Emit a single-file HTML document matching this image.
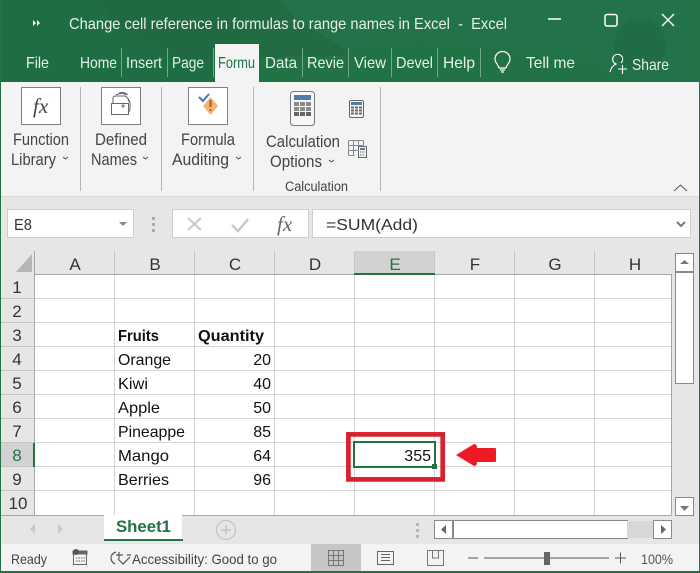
<!DOCTYPE html>
<html><head><meta charset="utf-8"><style>
html,body{margin:0;padding:0;width:700px;height:573px;overflow:hidden;background:#217346}
svg{display:block}
text{font-family:"Liberation Sans",sans-serif}
.t{fill:#e4f0e9;font-size:16px}
.r{fill:#444;font-size:16.500px}
.h{fill:#333;font-size:17px;text-anchor:middle}
.c{fill:#111;font-size:16px}
</style></head><body>
<svg width="700" height="573" viewBox="0 0 700 573" xmlns="http://www.w3.org/2000/svg">
<rect width="700" height="573" fill="#217346"/>
<rect x="0" y="0" width="240" height="82" fill="#1f6e43"/>
<path d="M240 0H700V82H640C600 60 560 50 520 50L420 40C350 45 300 50 240 45Z" fill="#23734a"/>
<path d="M100 0H280C300 30 340 40 350 55L180 60C130 40 110 20 100 0Z" fill="#23663f" opacity=".6"/>
<circle cx="640" cy="45" r="26" fill="#206c44"/>
<!-- title -->
<path d="M33 20l3 3-3 3zM37 20l3 3-3 3z" fill="#fff"/>
<text class="t" x="69" y="29" textLength="438" lengthAdjust="spacingAndGlyphs" xml:space="preserve">Change cell reference in formulas to range names in Excel  -  Excel</text>
<path d="M548 19h13" stroke="#fff" stroke-width="1.500"/>
<rect x="605" y="14.500" width="12" height="11.500" rx="2" fill="none" stroke="#fff" stroke-width="1.500"/>
<path d="M662 14l12 12M674 14l-12 12" stroke="#fff" stroke-width="1.400"/>
<!-- tabs -->
<rect x="215" y="44" width="44" height="40" fill="#f3f3f3"/>
<g stroke="#6fa88a" stroke-width="1"><path d="M121.500 48v29M167.500 48v29M213.500 48v29M302.500 48v29M348.500 48v29M391.500 48v29M437.500 48v29M480.500 48v29"/></g>
<text class="t" x="26" y="68" textLength="23" lengthAdjust="spacingAndGlyphs">File</text>
<text class="t" x="80" y="68" textLength="37" lengthAdjust="spacingAndGlyphs">Home</text>
<text class="t" x="126" y="68" textLength="36" lengthAdjust="spacingAndGlyphs">Insert</text>
<text class="t" x="172" y="68" textLength="32" lengthAdjust="spacingAndGlyphs">Page</text>
<text x="218" y="68" font-size="16" fill="#217346" textLength="37" lengthAdjust="spacingAndGlyphs">Formu</text>
<text class="t" x="265" y="68" textLength="32" lengthAdjust="spacingAndGlyphs">Data</text>
<text class="t" x="307" y="68" textLength="37" lengthAdjust="spacingAndGlyphs">Revie</text>
<text class="t" x="354" y="68" textLength="32" lengthAdjust="spacingAndGlyphs">View</text>
<text class="t" x="396" y="68" textLength="37" lengthAdjust="spacingAndGlyphs">Devel</text>
<text class="t" x="443" y="68" textLength="32" lengthAdjust="spacingAndGlyphs">Help</text>
<text class="t" x="526" y="68" textLength="49" lengthAdjust="spacingAndGlyphs">Tell me</text>
<text class="t" x="632" y="70" textLength="37" lengthAdjust="spacingAndGlyphs">Share</text>
<path d="M499 68c-1-4-4-5-4-9a7.500 7.500 0 0 1 15 0c0 4-3 5-4 9zM500 70h5M501 72h3" fill="none" stroke="#fff" stroke-width="1.200"/>
<path d="M610 72c1-5 4-7 6-8a5 5 0 1 1 5-1M618 69h9M622.500 65v9" fill="none" stroke="#fff" stroke-width="1.100"/>
<!-- ribbon -->
<rect x="1" y="82" width="698" height="114" fill="#f3f3f3"/>
<rect x="1" y="196" width="698" height="55" fill="#e6e6e6"/>
<path d="M1 196.500H699" stroke="#d8d8d8"/>
<g stroke="#b5b5b5"><path d="M80.500 87v104M161.500 87v104M253.500 87v104M380.500 87v104"/></g>
<g fill="#fff" stroke="#7f7f7f"><rect x="21.500" y="87.500" width="39" height="37"/><rect x="101.500" y="87.500" width="39" height="37"/><rect x="188.500" y="87.500" width="39" height="37"/></g>
<text x="33" y="113" font-size="21" font-style="italic" fill="#444" style="font-family:'Liberation Serif',serif">fx</text>
<g fill="none" stroke="#666" stroke-width="1"><rect x="111.500" y="103.500" width="17" height="11" fill="#fff"/><path d="M113 103v-5c0-1 1-2 3-2h9c2 1 4 3 5 7M116 95c3-2 8-2 10 0M119 93c3-1 6-1 9 2M128 100l2 3v7l-2 3"/><circle cx="123" cy="106" r="1"/></g>
<path d="M199 97l4 4 6-7" fill="none" stroke="#3f79b5" stroke-width="2"/>
<path d="M210.500 97l7.500 9-7.500 9-7.500-9z" fill="#efb672"/><path d="M210.500 100v7" stroke="#c9502a" stroke-width="2"/><circle cx="210.500" cy="110" r="1.100" fill="#c9502a"/>
<text class="r" x="13" y="145" textLength="56" lengthAdjust="spacingAndGlyphs">Function</text>
<text class="r" x="11" y="165" textLength="45" lengthAdjust="spacingAndGlyphs">Library</text>
<path d="M63 157l2.500 2 2.500-2" fill="none" stroke="#555"/>
<text class="r" x="95" y="145" textLength="52" lengthAdjust="spacingAndGlyphs">Defined</text>
<text class="r" x="91" y="165" textLength="46" lengthAdjust="spacingAndGlyphs">Names</text>
<path d="M143 157l2.500 2 2.500-2" fill="none" stroke="#555"/>
<text class="r" x="181" y="145" textLength="54" lengthAdjust="spacingAndGlyphs">Formula</text>
<text class="r" x="172" y="165" textLength="57" lengthAdjust="spacingAndGlyphs">Auditing</text>
<path d="M236 157l2.500 2 2.500-2" fill="none" stroke="#555"/>
<rect x="290.500" y="91.500" width="24" height="34" rx="3" fill="#f7f7f7" stroke="#777"/>
<rect x="294" y="95" width="17" height="5" fill="#4f7dac"/>
<g fill="#8a8a8a"><rect x="294" y="102" width="5" height="4"/><rect x="300" y="102" width="5" height="4"/><rect x="306" y="102" width="5" height="4"/><rect x="294" y="107" width="5" height="4"/><rect x="300" y="107" width="5" height="4"/><rect x="306" y="107" width="5" height="4"/><rect x="294" y="112" width="5" height="4" fill="#666"/><rect x="300" y="112" width="5" height="4" fill="#666"/><rect x="306" y="112" width="5" height="4" fill="#666"/></g>
<rect x="349.500" y="100.500" width="14" height="17" rx="1.500" fill="#f7f7f7" stroke="#666"/>
<rect x="351" y="102" width="11" height="3" fill="#4f7dac"/>
<path d="M351 107.500h11M351 110.500h11M351 113.500h11" stroke="#666" stroke-width="2" stroke-dasharray="3 1"/>
<path d="M348.500 140.500h15M348.500 145.500h15M348.500 150.500h9M348.500 155.500h6M348.500 140.500v15M353.500 140.500v15M358.500 140.500v6M363.500 140.500v5" stroke="#888" fill="none"/>
<rect x="358.500" y="146.500" width="8" height="11" fill="#f7f7f7" stroke="#666"/><rect x="360" y="148" width="5" height="2" fill="#4f7dac"/><path d="M360 152h5M360 155h5" stroke="#666" stroke-dasharray="1 .6"/>
<text class="r" x="266" y="147" textLength="74" lengthAdjust="spacingAndGlyphs">Calculation</text>
<text class="r" x="270" y="167" textLength="52" lengthAdjust="spacingAndGlyphs">Options</text>
<path d="M329 160l2.500 2 2.500-2" fill="none" stroke="#555"/>
<text x="285" y="191" font-size="13.500" fill="#444" textLength="63" lengthAdjust="spacingAndGlyphs">Calculation</text>
<path d="M674 191l6.500-6 6.500 6" fill="none" stroke="#555"/>
<!-- formula bar -->
<rect x="7.500" y="209.500" width="126" height="28" fill="#fff" stroke="#cfcfcf"/>
<text x="14" y="230" font-size="16" fill="#333" textLength="18" lengthAdjust="spacingAndGlyphs">E8</text>
<path d="M119 222h8l-4 4z" fill="#888"/>
<g fill="#aaa"><rect x="152" y="217" width="3" height="3"/><rect x="152" y="223" width="3" height="3"/><rect x="152" y="229" width="3" height="3"/></g>
<rect x="172.500" y="209.500" width="136" height="28" fill="#fff" stroke="#cfcfcf"/>
<rect x="312.500" y="209.500" width="378" height="28" fill="#fff" stroke="#cfcfcf"/>
<path d="M188 218l13 12M201 218l-13 12" stroke="#c8c8c8" stroke-width="2"/>
<path d="M232 225l6 6 10-12" fill="none" stroke="#c8c8c8" stroke-width="2.500"/>
<text x="277" y="231" font-size="21" font-style="italic" fill="#666" style="font-family:'Liberation Serif',serif">fx</text>
<text x="326" y="230" font-size="16" fill="#333" textLength="92" lengthAdjust="spacingAndGlyphs">=SUM(Add)</text>
<path d="M677 222l4 4 4-4" fill="none" stroke="#777" stroke-width="2"/>
<!-- grid -->
<rect x="1" y="251" width="698" height="265" fill="#e6e6e6"/>
<rect x="35" y="275" width="637" height="240" fill="#fff"/>
<rect x="354" y="251" width="81" height="23" fill="#d2d2d2"/>
<rect x="1" y="443" width="33" height="24" fill="#d2d2d2"/>
<path d="M32 254v18H16z" fill="#b5b5b5"/>
<g stroke="#d4d4d4"><path d="M114.500 275v240M194.500 275v240M274.500 275v240M354.500 275v240M434.500 275v240M514.500 275v240M594.500 275v240M35 298.500h637M35 322.500h637M35 346.500h637M35 370.500h637M35 394.500h637M35 418.500h637M35 442.500h637M35 466.500h637M35 490.500h637"/></g>
<g stroke="#c6c6c6"><path d="M114.500 251v23M194.500 251v23M274.500 251v23M354.500 251v23M434.500 251v23M514.500 251v23M594.500 251v23M1 298.500h33M1 322.500h33M1 346.500h33M1 370.500h33M1 394.500h33M1 418.500h33M1 442.500h33M1 466.500h33M1 490.500h33"/></g>
<path d="M34.500 251V515M34 274.500H672M671.500 274v241M1 515.500H672" stroke="#a6a6a6" fill="none"/>
<rect x="354" y="273" width="81" height="2" fill="#217346"/>
<rect x="33" y="443" width="2" height="24" fill="#217346"/>
<text class="h" x="75" y="270">A</text><text class="h" x="155" y="270">B</text><text class="h" x="235" y="270">C</text><text class="h" x="315" y="270">D</text><text class="h" x="395" y="270" style="fill:#217346">E</text><text class="h" x="475" y="270">F</text><text class="h" x="555" y="270">G</text><text class="h" x="635" y="270">H</text>
<text class="h" x="17" y="293">1</text><text class="h" x="17" y="317">2</text><text class="h" x="17" y="341">3</text><text class="h" x="17" y="365">4</text><text class="h" x="17" y="389">5</text><text class="h" x="17" y="413">6</text><text class="h" x="17" y="437">7</text><text class="h" x="17" y="461" style="fill:#217346">8</text><text class="h" x="17" y="485">9</text><text class="h" x="18" y="509">10</text>
<text x="118" y="341" font-size="16" font-weight="bold" fill="#111" textLength="41" lengthAdjust="spacingAndGlyphs">Fruits</text>
<text x="198" y="341" font-size="16" font-weight="bold" fill="#111" textLength="66" lengthAdjust="spacingAndGlyphs">Quantity</text>
<text class="c" x="118" y="365" textLength="53" lengthAdjust="spacingAndGlyphs">Orange</text>
<text class="c" x="118" y="389" textLength="30" lengthAdjust="spacingAndGlyphs">Kiwi</text>
<text class="c" x="118" y="413" textLength="42" lengthAdjust="spacingAndGlyphs">Apple</text>
<text class="c" x="118" y="437" textLength="67" lengthAdjust="spacingAndGlyphs">Pineappe</text>
<text class="c" x="118" y="461" textLength="51" lengthAdjust="spacingAndGlyphs">Mango</text>
<text class="c" x="118" y="485" textLength="51" lengthAdjust="spacingAndGlyphs">Berries</text>
<g text-anchor="end"><text class="c" x="271" y="365">20</text><text class="c" x="271" y="389">40</text><text class="c" x="271" y="413">50</text><text class="c" x="271" y="437">85</text><text class="c" x="271" y="461">64</text><text class="c" x="271" y="485">96</text><text class="c" x="431" y="461">355</text></g>
<!-- selection -->
<rect x="354" y="442" width="81" height="25" fill="none" stroke="#217346" stroke-width="2"/>
<rect x="432" y="464" width="5" height="5" fill="#217346"/>
<rect x="348.400" y="434.400" width="94.300" height="45" fill="none" stroke="#d9202c" stroke-width="4.700"/>
<path d="M456 455L474 444Q477 444 477 448H495Q496 448 496 449V461Q496 462 495 462H477Q477 466 474 466Z" fill="#ed1c24"/>
<!-- v scroll -->
<rect x="672" y="251" width="27" height="265" fill="#e6e6e6"/>
<rect x="675.500" y="253.500" width="18" height="18" fill="#fff" stroke="#8a8a8a"/>
<path d="M680 264h9l-4.500-4z" fill="#777"/>
<rect x="675.500" y="272.500" width="18" height="111" fill="#fff" stroke="#8a8a8a"/>
<rect x="675.500" y="497.500" width="18" height="18" fill="#fff" stroke="#8a8a8a"/>
<path d="M680 506h9l-4.500 5z" fill="#777"/>
<!-- tab bar -->
<rect x="1" y="516" width="698" height="28" fill="#e6e6e6"/>
<path d="M1 515.500H672" stroke="#a6a6a6"/>
<path d="M35 524l-5 5 5 5zM58 524l5 5-5 5z" fill="#c9c9c9"/>
<rect x="104" y="515" width="78" height="25" fill="#fff"/>
<rect x="104" y="539" width="79" height="2" fill="#217346"/>
<text x="116" y="532" font-size="17" font-weight="bold" fill="#217346" textLength="55" lengthAdjust="spacingAndGlyphs">Sheet1</text>
<circle cx="226" cy="530" r="9.500" fill="none" stroke="#c4c4c4" stroke-width="1.300"/><path d="M221 530h10M226 525v10" stroke="#c4c4c4" stroke-width="1.500"/>
<g fill="#b5b5b5"><rect x="416" y="523" width="3" height="3"/><rect x="416" y="529" width="3" height="3"/><rect x="416" y="535" width="3" height="3"/></g>
<rect x="434.500" y="520.500" width="18" height="18" fill="#fff" stroke="#8a8a8a"/>
<path d="M446 525v9l-5-4.500z" fill="#666"/>
<rect x="453.500" y="520.500" width="174" height="18" fill="#fff" stroke="#8a8a8a"/>
<rect x="627" y="521" width="26" height="17" fill="#d8d8d8"/>
<rect x="653.500" y="520.500" width="18" height="18" fill="#fff" stroke="#8a8a8a"/>
<path d="M661 525v9l5-4.500z" fill="#666"/>
<!-- status bar -->
<rect x="1" y="544" width="698" height="27" fill="#f3f3f3"/>
<rect x="311" y="544" width="50" height="27" fill="#c6c6c6"/>
<text x="11" y="564" font-size="14" fill="#444" textLength="36" lengthAdjust="spacingAndGlyphs">Ready</text>
<g fill="none" stroke="#666"><rect x="73.500" y="551.500" width="13" height="13" fill="#f5f5f5"/><rect x="73" y="551" width="14" height="3" fill="#666"/><circle cx="76" cy="552" r="3" fill="#555" stroke="none"/><path d="M76 558h9M76 561h9" stroke-dasharray="1.500 1"/></g>
<path d="M116 552c-3 1-5 3-5 6s2 5 4 6M119 552v7M116 555h7M127 555h4M118 559l5 5 7-7" fill="none" stroke="#555" stroke-width="1.200"/>
<text x="132" y="564" font-size="14" fill="#444" textLength="145" lengthAdjust="spacingAndGlyphs">Accessibility: Good to go</text>
<g stroke="#777" fill="none"><rect x="328.500" y="550.500" width="15" height="15"/><path d="M328 555.500h16M328 560.500h16M333.500 550v16M338.500 550v16"/></g>
<g stroke="#666" fill="none"><rect x="377.500" y="551.500" width="16" height="13"/><path d="M381 554.500h9M381 557.500h9M381 560.500h9"/></g>
<g stroke="#777" fill="none"><rect x="427.500" y="550.500" width="16" height="15"/><path d="M432.500 550v8h6v-8"/></g>
<path d="M468 558h10M484 558h125M615 558h11M620.500 552.500v11" stroke="#555" stroke-width="1"/>
<rect x="544" y="552" width="6" height="13" fill="#666"/>
<text x="641" y="564" font-size="14" fill="#555" textLength="32" lengthAdjust="spacingAndGlyphs">100%</text>
<rect x="0" y="0" width="1" height="573" fill="#217346"/><rect x="699" y="0" width="1" height="573" fill="#217346"/><rect x="0" y="571" width="700" height="2" fill="#217346"/>
</svg>
</body></html>
